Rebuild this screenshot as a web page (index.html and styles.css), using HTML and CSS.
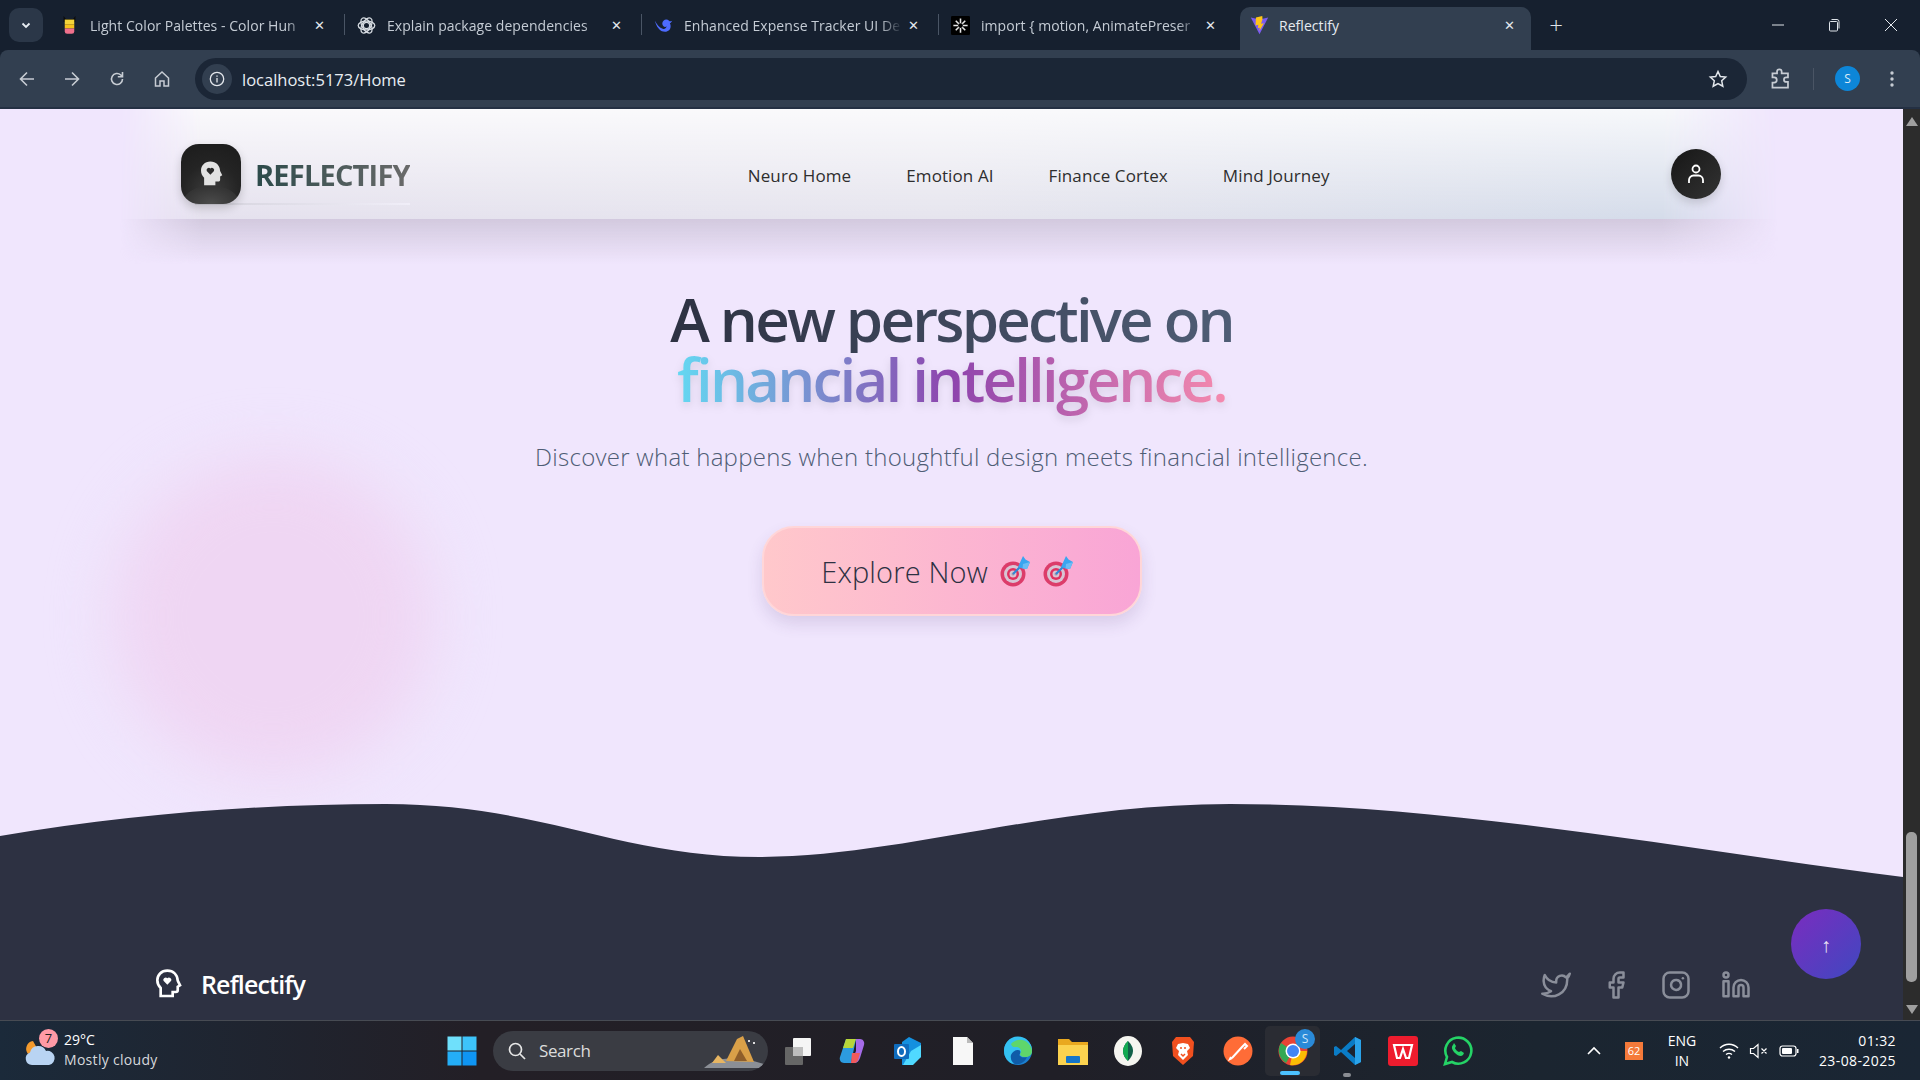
FILE: index.html
```html
<!DOCTYPE html>
<html lang="en">
<head>
<meta charset="utf-8">
<title>Reflectify</title>
<link rel="stylesheet" href="styles.css">
</head>
<body>
<div class="screen">
  <header class="browser">
    <div class="tabstrip">
      <div class="tabmenu"><svg viewBox="0 0 12 12" class="i12"><path d="M2.500 4.500 6 8l3.500-3.500" fill="none" stroke="#e8edf3" stroke-width="1.800"/></svg></div>
      <div class="tab">
        <svg class="favicon" viewBox="0 0 16 16"><path d="M3 0l2 2.500h6L13 0v5H3z" fill="#0c0c0c"/><rect x="4" y="3" width="8" height="4" fill="#f4d43a"/><rect x="4" y="7" width="8" height="3.500" fill="#f6c21c"/><path d="M4 10.500h8V13a2 2 0 0 1-2 2H6a2 2 0 0 1-2-2z" fill="#f0708c"/></svg>
        <span class="tabtitle">Light Color Palettes - Color Hun</span><span class="tabclose">✕</span>
      </div>
      <div class="tab">
        <svg class="favicon" viewBox="0 0 24 24" fill="none" stroke="#d8dde3" stroke-width="1.600"><circle cx="12" cy="12" r="4"/><ellipse cx="12" cy="12" rx="10.500" ry="5.500"/><ellipse cx="12" cy="12" rx="10.500" ry="5.500" transform="rotate(60 12 12)"/><ellipse cx="12" cy="12" rx="10.500" ry="5.500" transform="rotate(120 12 12)"/></svg>
        <span class="tabtitle">Explain package dependencies</span><span class="tabclose">✕</span>
      </div>
      <div class="tab">
        <svg class="favicon" viewBox="0 0 24 24"><path d="M1 6c2 7 6 14 13 14 4 0 7-3 7-7 0-2-.500-3-1-4 1 0 2-1 3-3-2 1-3 1-4 0-2-2-5-2-7 0-2 2-2 5 0 7 1 1 3 1 4 0-1 3-3 4-5 3-4-1-7-5-10-10z" fill="#4d6bfe"/></svg>
        <span class="tabtitle">Enhanced Expense Tracker UI De</span><span class="tabclose">✕</span>
      </div>
      <div class="tab">
        <svg class="favicon" viewBox="0 0 16 16"><rect width="16" height="16" rx="1" fill="#000"/><g stroke="#e8e8e8" stroke-width="1.300"><path d="M8 2v12M2 8h12M4 4l8 8M12 4l-8 8"/></g><circle cx="8" cy="8" r="2" fill="#000"/></svg>
        <span class="tabtitle">import { motion, AnimatePreser</span><span class="tabclose">✕</span>
      </div>
      <div class="tab tab-active">
        <svg class="favicon" viewBox="0 0 24 24"><path d="M1 2l11 21L23 2l-11 2.500z" fill="#7c5cf0"/><path d="M15.500 0 7.500 2l-.5 10 3.500-.8-.6 4 2.500-.5-.5 4.300L17.500 9l-3.500.7 1.800-5.500z" fill="#ffc517"/></svg>
        <span class="tabtitle">Reflectify</span><span class="tabclose">✕</span>
      </div>
      <span class="newtab">+</span>
      <div class="winbtns">
        <span class="winbtn"><svg class="i12" viewBox="0 0 12 12"><path d="M0 6h12" stroke="#dfe4ea" stroke-width="1"/></svg></span>
        <span class="winbtn"><svg class="i14" viewBox="0 0 14 14" fill="none" stroke="#dfe4ea"><rect x="2.500" y="3.500" width="8" height="9.500" rx="1"/><path d="M4.500 1.500h5.500a2 2 0 0 1 2 2v7"/></svg></span>
        <span class="winbtn"><svg class="i14" viewBox="0 0 14 14"><path d="M1 1l12 12M13 1L1 13" stroke="#e6eaef" stroke-width="1"/></svg></span>
      </div>
    </div>
    <div class="toolbar">
      <div class="navbtns">
        <svg class="tool" viewBox="0 0 20 20" fill="none" stroke="#c7ccd3" stroke-width="1.600"><path d="M17 10H4M10 3.500 3.500 10l6.500 6.500"/></svg>
        <svg class="tool" viewBox="0 0 20 20" fill="none" stroke="#c7ccd3" stroke-width="1.600"><path d="M3 10h13M10 3.500l6.500 6.500-6.500 6.500"/></svg>
        <svg class="tool" viewBox="0 0 20 20" fill="none" stroke="#c7ccd3" stroke-width="1.600"><path d="M15.500 10a5.500 5.500 0 1 1-1.700-4l1.700 1.600M15.500 3v4.700h-4.700"/></svg>
        <svg class="tool" viewBox="0 0 20 20" fill="none" stroke="#c7ccd3" stroke-width="1.500"><path d="M3.500 9 10 3l6.500 6v8h-4.500v-5H8v5H3.500z"/></svg>
      </div>
      <div class="omnibox">
        <span class="siteinfo"><svg class="i16" viewBox="0 0 16 16" fill="none" stroke="#e3e7ec" stroke-width="1.300"><circle cx="8" cy="8" r="6.700"/><path d="M8 7v4.500M8 4.400v1.300"/></svg></span>
        <span class="url">localhost:5173/Home</span>
        <svg class="star" viewBox="0 0 20 20" fill="none" stroke="#e3e7ec" stroke-width="1.500"><path d="M10 2.500l2.300 5 5.400.6-4 3.700 1.100 5.400L10 14.500l-4.800 2.700 1.100-5.400-4-3.700 5.400-.6z"/></svg>
      </div>
      <div class="toolright">
        <svg class="tool tool-ext" viewBox="0 0 20 20" fill="none" stroke="#c7ccd3" stroke-width="1.500"><path d="M3 5.500h4V4a2 2 0 0 1 4 0v1.500h5.500V9H15a2 2 0 0 0 0 4h1.500v5H3v-4.500h1.500a2.200 2.200 0 0 0 0-4.500H3z"/></svg>
        <span class="toolsep"></span>
        <span class="avatar">S</span>
        <svg class="tool tool-dots" viewBox="0 0 20 20" fill="#c7ccd3"><circle cx="10" cy="4" r="1.700"/><circle cx="10" cy="10" r="1.700"/><circle cx="10" cy="16" r="1.700"/></svg>
      </div>
    </div>
  </header>

  <div class="viewport">
    <main class="page">
      <div class="blob"></div>
      <nav class="sitenav">
        <div class="brand">
          <span class="brandmark">
            <svg class="headicon" viewBox="0 0 24 24"><path d="M11.500 2C7 2 4 5.200 4 9.200c0 2.600 1.100 4.400 2.500 5.800v6h9v-3h2.300c1 0 1.500-.6 1.500-1.500V14l1.700-1-1.700-3.500C19 5 16 2 11.500 2z" fill="#e2e2e2"/><path d="M11.500 12.500 8.600 9.600a1.800 1.800 0 0 1 2.900-2 1.800 1.800 0 0 1 2.900 2z" fill="#2b2b2b"/></svg>
          </span>
          <span class="brandname">REFLECTIFY</span>
        </div>
        <ul class="navlinks">
          <li>Neuro Home</li>
          <li>Emotion AI</li>
          <li>Finance Cortex</li>
          <li>Mind Journey</li>
        </ul>
        <button class="userbtn" type="button">
          <svg viewBox="0 0 24 24" fill="none" stroke="#fff" stroke-width="1.800"><circle cx="12" cy="7" r="3.500"/><path d="M5 21v-3a4.500 4.500 0 0 1 4.500-4.500h5A4.500 4.500 0 0 1 19 18v3"/></svg>
        </button>
      </nav>

      <section class="hero">
        <h1 class="headline"><span class="line-dark">A new perspective on</span><span class="line-grad">financial intelligence.</span></h1>
        <p class="subhead">Discover what happens when thoughtful design meets financial intelligence.</p>
        <button class="cta" type="button">
          <span>Explore Now</span>
          <svg class="dart" viewBox="0 0 32 32"><circle cx="14" cy="19" r="12.500" fill="#dc3c6a"/><circle cx="14" cy="19" r="9" fill="#d8c4d4"/><circle cx="14" cy="19" r="6" fill="#e0305f"/><circle cx="14" cy="19" r="3.500" fill="#d8c4d4"/><circle cx="14" cy="19" r="1.500" fill="#a898aa"/><path d="M14 19 24 9" stroke="#2f86d6" stroke-width="2.200"/><path d="M19 12 24 1l2.500 3.500L31 7l-3 7-4.500-.6z" fill="#3aa5f0"/><path d="M24 9l7-2-3 7-4.500-.6z" fill="#6bbcf5"/></svg>
          <svg class="dart" viewBox="0 0 32 32"><circle cx="14" cy="19" r="12.500" fill="#dc3c6a"/><circle cx="14" cy="19" r="9" fill="#d8c4d4"/><circle cx="14" cy="19" r="6" fill="#e0305f"/><circle cx="14" cy="19" r="3.500" fill="#d8c4d4"/><circle cx="14" cy="19" r="1.500" fill="#a898aa"/><path d="M14 19 24 9" stroke="#2f86d6" stroke-width="2.200"/><path d="M19 12 24 1l2.500 3.500L31 7l-3 7-4.500-.6z" fill="#3aa5f0"/><path d="M24 9l7-2-3 7-4.500-.6z" fill="#6bbcf5"/></svg>
        </button>
      </section>

      <footer class="footer">
        <svg class="wave" viewBox="0 0 1903 80" preserveAspectRatio="none"><path d="M0 32C130 10 260 0 386 0 540 0 620 53 759 53 900 53 1050 0 1230 0 1450 0 1680 45 1903 73V80H0Z" fill="#2d3142"/></svg>
        <div class="footbody">
          <div class="footbrand">
            <svg class="footicon" viewBox="0 0 24 24"><path d="M11.500 2C7 2 4 5.200 4 9.200c0 2.600 1.100 4.400 2.500 5.800v6h9v-3h2.300c1 0 1.500-.6 1.500-1.500V14l1.700-1-1.700-3.500C19 5 16 2 11.500 2z" fill="none" stroke="#fff" stroke-width="2"/><path d="M11.500 12.500 8.600 9.600a1.800 1.800 0 0 1 2.900-2 1.800 1.800 0 0 1 2.900 2z" fill="#fff"/></svg>
            <span>Reflectify</span>
          </div>
          <div class="socials">
            <svg viewBox="0 0 24 24"><path d="M23 3a10.900 10.900 0 0 1-3 3 4.480 4.480 0 0 0-7.860 3v1A10.660 10.660 0 0 1 3 4s-4 9 5 13a11.640 11.640 0 0 1-7 2c9 5 20 0 20-11.500a4.500 4.500 0 0 0-.08-.83A7.720 7.720 0 0 0 23 3z"/></svg>
            <svg viewBox="0 0 24 24"><path d="M18 2h-3a5 5 0 0 0-5 5v3H7v4h3v8h4v-8h3l1-4h-4V7a1 1 0 0 1 1-1h3z"/></svg>
            <svg viewBox="0 0 24 24"><rect x="2" y="2" width="20" height="20" rx="5"/><path d="M16 11.370A4 4 0 1 1 12.630 8 4 4 0 0 1 16 11.370z"/><path d="M17.500 6.500h.01"/></svg>
            <svg viewBox="0 0 24 24"><path d="M16 8a6 6 0 0 1 6 6v7h-4v-7a2 2 0 0 0-4 0v7h-4v-7a6 6 0 0 1 6-6z"/><rect x="2" y="9" width="4" height="12"/><circle cx="4" cy="4" r="2"/></svg>
          </div>
        </div>
      </footer>
      <button class="totop" type="button">↑</button>
    </main>
    <aside class="scrollbar">
      <span class="arrow-up"></span>
      <span class="thumbspace"><span class="thumb"></span></span>
      <span class="arrow-down"></span>
    </aside>
  </div>

  <div class="taskbar">
    <div class="weather">
      <span class="weathericon">
        <svg viewBox="0 0 32 32"><path d="M9 6a8 8 0 0 0-5 13l10-4z" fill="#f39a2d"/><path d="M8 30a6.500 6.500 0 0 1-2-12.600A8.500 8.500 0 0 1 22 16a6 6 0 0 1 3 14z" fill="#b9d4f3"/></svg>
        <span class="wbadge">7</span>
      </span>
      <span class="wtext"><span>29°C</span><span class="wdesc">Mostly cloudy</span></span>
    </div>
    <div class="taskcenter">
      <svg class="winlogo" viewBox="0 0 30 30"><rect width="14" height="14" x="0.500" y="0.500" fill="#6fe0fb"/><rect width="14" height="14" x="15.500" y="0.500" fill="#3dc4fa"/><rect width="14" height="14" x="0.500" y="15.500" fill="#24aef7"/><rect width="14" height="14" x="15.500" y="15.500" fill="#0f95f3"/></svg>
      <div class="searchbox">
        <svg class="i20" viewBox="0 0 20 20" fill="none" stroke="#e6e6e6" stroke-width="1.700"><circle cx="8.500" cy="8.500" r="6"/><path d="M13 13l5 5"/></svg>
        <span>Search</span>
        <svg class="searchart" viewBox="0 0 60 34"><path d="M0 34C10 24 30 20 60 30v4z" fill="#8b8f96"/><path d="M22 27 33 5l6-3 11 26z" fill="#d9a048"/><path d="M30 27l6-12 7 12z" fill="#8e5e2a"/><path d="M8 29l6-8 8 8z" fill="#e6b562"/><rect x="44" y="6" width="2" height="2" fill="#ddd"/><rect x="49" y="8" width="2" height="2" fill="#ddd"/></svg>
      </div>
      <div class="apps">
        <span class="app"><svg viewBox="0 0 30 30"><rect x="10" y="2" width="18" height="18" rx="1" fill="#f5f5f5"/><rect x="2" y="11" width="18" height="18" rx="1" fill="#666"/><rect x="10" y="11" width="10" height="9" fill="#bdbdbd"/></svg></span>
        <span class="app"><svg viewBox="0 0 30 30"><path d="M8 3h10l-5 24H6c-3 0-5-3-4-6z" fill="#2c9be0"/><path d="M8 3h10l-3 9H5z" fill="#b7d63a"/><path d="M18 3h4c3 0 5 3 4 6l-4 13c-1 3-3 5-6 5h-3l5-12z" fill="#a56be8"/><path d="M14 17h8l-2 7c-1 2-2 3-4 3h-3z" fill="#f05a5a"/></svg></span>
        <span class="app"><svg viewBox="0 0 30 30"><path d="M16 1 28 7v14L16 29H9V6z" fill="#1490df"/><path d="M18 15l10-6v12l-8 8H10z" fill="#50d9ff"/><rect x="1" y="8" width="15" height="15" rx="1" fill="#0f6cbd"/><ellipse cx="8.500" cy="15.500" rx="3.500" ry="4.500" fill="none" stroke="#fff" stroke-width="2"/></svg></span>
        <span class="app"><svg viewBox="0 0 30 30"><path d="M5 1h14l6 6v22H5z" fill="#f7f7f7"/><path d="M19 1l6 6h-6z" fill="#bbb"/></svg></span>
        <span class="app"><svg viewBox="0 0 30 30"><circle cx="15" cy="15" r="14" fill="#1b7fd0"/><path d="M1 15A14 14 0 0 1 29 14c0 5-4 7-8 7-3 0-5-2-4-4-4-3-9 0-9 5 0 2 1 4 3 6C5 27 1 21 1 15z" fill="#35c1f1"/><path d="M8 8c4-5 12-6 17-1 2 2 4 5 4 8 0 4-3 6-7 6-3 0-5-1-5-3 3-3 0-7-4-7-2 0-4 .5-5-3z" fill="#5fd66b"/><path d="M15 14c3 0 3 3 1 5 2 3 5 3 8 2-2 5-7 8-12 7-3-2-5-5-4-9 1-3 4-5 7-5z" fill="#0f5ca8"/></svg></span>
        <span class="app"><svg viewBox="0 0 30 30"><path d="M0 3h11l3 3h16v22H0z" fill="#e9a81f"/><path d="M0 9h30v20H0z" fill="#fbd24f"/><rect x="8" y="20" width="14" height="7" rx="1" fill="#1475c9"/></svg></span>
        <span class="app"><svg viewBox="0 0 30 30"><ellipse cx="15" cy="15" rx="14" ry="15" fill="#f5f5f0"/><path d="M15 5c4 4 5 7 5 10s-2 7-5 10c-3-3-5-6-5-10s2-7 5-10z" fill="#116149"/><path d="M15 5c-3 3-5 6-5 10s2 7 5 10z" fill="#13aa52"/></svg></span>
        <span class="app"><svg viewBox="0 0 30 30"><path d="M8 1h14l4 5-1 14-10 9-10-9L4 6z" fill="#f1501f"/><path d="M15 7l5 1 2 4-3 3 1 4-5 5-5-5 1-4-3-3 2-4z" fill="#fff"/><path d="M12 12h2M16 12h2M13 18l2 2 2-2" stroke="#f1501f" stroke-width="1.500" fill="none"/></svg></span>
        <span class="app"><svg viewBox="0 0 30 30"><circle cx="15" cy="15" r="14.500" fill="#ff6c37"/><path d="M9 22l10-11M19 11l3-3 2 2-3 3M9 22l-2 1 1-2" stroke="#fff" stroke-width="2" fill="none"/></svg></span>
        <span class="app app-active"><svg viewBox="0 0 30 30"><circle cx="15" cy="15" r="14.500" fill="#e94335"/><path d="M15 15h14A14.500 14.500 0 0 1 12 29z" fill="#fbbc04"/><path d="M15 15 8 27A14.500 14.500 0 0 1 3 7z" fill="#34a853"/><circle cx="15" cy="15" r="7.500" fill="#fff"/><circle cx="15" cy="15" r="6" fill="#4285f4"/></svg><span class="appbadge">S</span><span class="runbar"></span></span>
        <span class="app"><svg viewBox="0 0 30 30"><path d="M22 1 28 4v22l-6 3L8 16l-5 4-2-1v-8l2-1 5 4z" fill="#0a7cc6"/><path d="M22 1 28 4v22l-6 3z" fill="#2aa3ea"/><path d="M22 8v14l-8-7z" fill="#1c2430"/></svg><span class="rundot"></span></span>
        <span class="app"><svg viewBox="0 0 30 30"><rect width="30" height="30" rx="3" fill="#ee1c2e"/><path d="M6 9h18l-3 13h-3l-3-9-3 9H9z" fill="none" stroke="#fff" stroke-width="2.200"/></svg></span>
        <span class="app"><svg viewBox="0 0 30 30"><path d="M2 28l2-7A13 13 0 1 1 9 26z" fill="none" stroke="#25d366" stroke-width="2.600"/><path d="M10 9c-2 2-1 5 2 8s6 4 8 2l1-2-3-2-2 1c-1 0-4-3-4-4l1-2-2-3z" fill="#25d366"/></svg></span>
      </div>
    </div>
    <div class="tray">
      <svg class="trayup" viewBox="0 0 16 16" fill="none" stroke="#fff" stroke-width="1.600"><path d="M2 11l6-6 6 6"/></svg>
      <span class="traybadge">62</span>
      <span class="traylang"><span>ENG</span><span>IN</span></span>
      <svg class="trayico" viewBox="0 0 20 20" fill="none" stroke="#fff" stroke-width="1.400"><path d="M1 7c5-5 13-5 18 0M4 10.500c3.500-3 8.500-3 12 0M7 13.500c2-1.500 4-1.500 6 0"/><circle cx="10" cy="16.500" r="1.200" fill="#fff" stroke="none"/></svg>
      <svg class="trayico" viewBox="0 0 20 20" fill="none" stroke="#fff" stroke-width="1.200"><path d="M1.500 7.500h3L9 3.500v13l-4.500-4h-3zM12.500 7.500l5 5M17.500 7.500l-5 5"/></svg>
      <svg class="trayico" viewBox="0 0 20 20"><rect x="1" y="5" width="16" height="10" rx="2.500" fill="none" stroke="#fff" stroke-width="1.200"/><rect x="3" y="7" width="10" height="6" rx="1" fill="#fff"/><rect x="18" y="8" width="1.500" height="4" fill="#fff"/></svg>
      <span class="clock"><span>01:32</span><span>23-08-2025</span></span>
    </div>
  </div>
</div>
</body>
</html>
```

FILE: styles.css
```css
* { box-sizing: border-box; }
html, body { margin: 0; height: 100%; overflow: hidden; }
body { font-family: "Open Sans", "Noto Sans", sans-serif; background: #16202f; }
button { font: inherit; border: 0; padding: 0; }
svg { display: block; flex: none; }
.i12 { width: 12px; height: 12px; }
.i14 { width: 14px; height: 14px; }
.i16 { width: 16px; height: 16px; }
.i20 { width: 20px; height: 20px; }

.screen { display: flex; flex-direction: column; width: 1920px; height: 1080px; }

/* browser chrome */
.browser { flex: none; height: 109px; background: #16202f; }
.tabstrip { display: flex; align-items: flex-end; height: 50px; padding-left: 9px; }
.tabmenu { width: 34px; height: 34px; margin: 0 5px 8px 0; border-radius: 10px; background: #2b3748; display: flex; align-items: center; justify-content: center; }
.tab { position: relative; display: flex; align-items: center; width: 297px; height: 43px; padding: 0 15px 7px 12px; color: #c5ccd5; font-size: 14px; letter-spacing: 0.05px; }
.tab::after { content: ""; position: absolute; right: 0; top: 7px; height: 21px; width: 1px; background: #4a5565; }
.tab:nth-child(5)::after { display: none; }
.favicon { width: 19px; height: 19px; margin-right: 11px; }
.tabtitle { flex: 1; min-width: 0; overflow: hidden; white-space: nowrap; -webkit-mask-image: linear-gradient(90deg, #000 90%, transparent); mask-image: linear-gradient(90deg, #000 90%, transparent); }
.tabclose { width: 20px; margin-left: 2px; font-size: 13px; text-align: center; color: #e4e8ed; }
.tab-active { width: 291px; margin-left: 4px; padding: 0 11px 7px 10px; background: #323f50; border-radius: 10px 10px 0 0; color: #e6ebf0; }
.tab-active::after { display: none; }
.tab-active .favicon { margin-right: 10px; }
.tab-active .tabtitle { -webkit-mask-image: none; mask-image: none; }
.newtab { width: 50px; height: 43px; color: #dfe4ea; font-size: 24px; font-weight: 300; line-height: 36px; text-align: center; }
.winbtns { display: flex; margin-left: auto; padding-right: 1px; align-self: flex-start; }
.winbtn { width: 56.500px; height: 50px; display: flex; align-items: center; justify-content: center; }

.toolbar { display: flex; align-items: center; height: 59px; background: #323f50; border-bottom: 2px solid #243043; border-radius: 8px 8px 0 0; }
.navbtns { display: flex; gap: 25px; padding-left: 17px; }
.tool { width: 20px; height: 20px; }
.tool-ext { width: 23px; height: 23px; }
.omnibox { display: flex; align-items: center; width: 1552px; height: 42px; margin-left: 23px; padding: 0 19px 0 7px; border-radius: 21px; background: #1b2636; }
.siteinfo { width: 30px; height: 30px; border-radius: 50%; background: #323f50; display: flex; align-items: center; justify-content: center; }
.url { margin-left: 10px; padding-top: 1px; color: #e8edf3; font-size: 16.500px; }
.star { width: 20px; height: 20px; margin-left: auto; }
.toolright { display: flex; align-items: center; margin-left: 22px; }
.toolsep { width: 1px; height: 22px; margin: 0 21px 0 21px; background: #4a5565; }
.avatar { width: 25px; height: 25px; border-radius: 50%; background: #0d86d8; color: #dcebf7; font-size: 12px; line-height: 25px; text-align: center; }
.tool-dots { margin-left: 22px; }

/* page */
.viewport { flex: 1; display: flex; min-height: 0; }
.page { position: relative; flex: 1; display: flex; flex-direction: column; overflow: hidden; background: #f0e6fd; }
.blob { position: absolute; left: 113px; top: 348px; width: 320px; height: 320px; border-radius: 50%; background: #efd6f3; filter: blur(30px); }

.sitenav { position: relative; flex: none; display: flex; align-items: center; height: 110px; padding: 20px 182px 0 181px; }
.sitenav::before { content: ""; position: absolute; left: 120px; right: 125px; top: 0; height: 155px;
  background:
    linear-gradient(180deg, #d2c9de 0, rgba(240,230,253,0) 100%) 0 110px / 100% 45px no-repeat,
    linear-gradient(180deg, rgba(255,255,255,.8), rgba(255,255,255,0)) 0 0 / 100% 110px no-repeat,
    linear-gradient(90deg, #e5e1ee, #e6e5ee 50%, #d5dcea 92%) 0 0 / 100% 110px no-repeat;
  -webkit-mask-image: linear-gradient(90deg, transparent 0, #000 5%, #000 93%, transparent 100%);
  mask-image: linear-gradient(90deg, transparent 0, #000 5%, #000 93%, transparent 100%); }
.brand { position: relative; display: flex; align-items: center; gap: 14px; }
.brand::after { content: ""; position: absolute; left: 14px; right: 0; bottom: 0; height: 2px; background: linear-gradient(90deg, #d4d2dc, #f0eef8); }
.brandmark { position: relative; z-index: 1; width: 60px; height: 60px; border-radius: 18px; background: radial-gradient(ellipse 40px 26px at 50% 100%, #4c4c4c 0, #333 70%, transparent 72%), radial-gradient(circle at 50% 80%, #3d3d3d 0, #242424 50%, #1b1b1b 100%); display: flex; align-items: center; justify-content: center; box-shadow: 0 4px 10px rgba(0,0,0,.18); }
.headicon { width: 30px; height: 30px; }
.brandname { font-size: 29px; font-weight: 700; letter-spacing: -0.8px; line-height: 60px; padding-top: 2px; background: linear-gradient(90deg, #2c4a4a, #6a6a6a); -webkit-background-clip: text; background-clip: text; color: transparent; }
.navlinks { position: relative; display: flex; gap: 55px; list-style: none; margin: 2px 0 0 338px; padding: 0; color: #2e2e2e; font-size: 17px; font-weight: 500; letter-spacing: 0.1px; }
.userbtn { position: relative; width: 50px; height: 50px; margin-left: auto; border-radius: 50%; background: linear-gradient(135deg, #161616, #333); display: flex; align-items: center; justify-content: center; box-shadow: 0 4px 10px rgba(0,0,0,.15); }
.userbtn svg { width: 24px; height: 24px; }

.hero { position: relative; flex: 1; display: flex; flex-direction: column; align-items: center; padding-top: 70px; }
.headline { margin: 0; display: flex; flex-direction: column; align-items: center; font-size: 60px; font-weight: 550; line-height: 60px; letter-spacing: -2.800px; }
.line-dark { background: linear-gradient(90deg, #2d3142, #4f5d75); -webkit-background-clip: text; background-clip: text; color: transparent; padding-bottom: 4px; margin-bottom: -4px; }
.line-grad { background: linear-gradient(90deg, #64d8f2, #8e44ad 50%, #f58aae); -webkit-background-clip: text; background-clip: text; color: transparent; padding-bottom: 14px; margin-bottom: -14px; filter: drop-shadow(0 4px 4px rgba(0,0,0,.1)); }
.subhead { margin: 30px 0 0; color: #4f5d75; font-size: 24px; font-weight: 300; line-height: 36px; letter-spacing: 0.27px; }
.cta { display: flex; align-items: center; justify-content: center; gap: 11px; width: 380px; height: 90px; margin-top: 51px; padding-right: 8px; border: 2px solid #ffd6d8; border-radius: 32px; background: linear-gradient(90deg, #ffc8cb, #f9a5d6); color: #2d3142; font-size: 29px; font-weight: 300; letter-spacing: 0.15px; box-shadow: 0 8px 16px rgba(80,50,110,.14); }
.dart { width: 32px; height: 32px; }

.footer { flex: none; position: relative; }
.wave { width: 100%; height: 80px; }
.footbody { display: flex; align-items: flex-end; justify-content: space-between; height: 137px; margin-top: -1px; padding: 0 152px 20px 152px; background: #2d3142; }
.footbrand { display: flex; align-items: center; gap: 17px; color: #fff; font-size: 25px; font-weight: 600; letter-spacing: -0.85px; line-height: 30px; }
.footicon { width: 32px; height: 32px; }
.socials { display: flex; gap: 30px; }
.socials svg { width: 30px; height: 30px; fill: none; stroke: #8a8e9a; stroke-width: 2; stroke-linejoin: round; stroke-linecap: round; }
.totop { position: absolute; left: 1791px; top: 800px; width: 70px; height: 70px; border-radius: 50%; background: linear-gradient(135deg, #7b2cbf, #3f48c0); color: #e8e2f5; font-size: 20px; }

.scrollbar { flex: none; width: 17px; display: flex; flex-direction: column; background: #2c2c2c; }
.arrow-up, .arrow-down { flex: none; width: 0; height: 0; margin: 8px auto 0; border: 6px solid transparent; border-top: 0; border-bottom: 9px solid #9f9f9f; }
.arrow-down { margin: 0 auto 6px; border-bottom: 0; border-top: 9px solid #9f9f9f; }
.thumbspace { flex: 1; display: flex; flex-direction: column; justify-content: flex-end; padding: 0 3px 23px; }
.thumb { height: 150px; border-radius: 5px; background: #9f9f9f; }

/* taskbar */
.taskbar { flex: none; position: relative; display: flex; align-items: center; height: 60px; border-top: 1px solid #474b53; background: linear-gradient(90deg, #1b2a3a 0, #231f26 25%, #201f27 55%, #1b2530 80%, #1a2634 100%); color: #fff; font-size: 14px; }
.weather { display: flex; align-items: center; gap: 8px; width: 447px; padding-left: 24px; }
.weathericon { position: relative; width: 32px; height: 34px; margin-top: -3px; }
.weathericon svg { width: 32px; height: 32px; margin-top: 3px; }
.wbadge { position: absolute; left: 15px; top: -3px; width: 19px; height: 19px; border-radius: 50%; background: #ff9aa6; color: #222; font-size: 13px; line-height: 19px; text-align: center; }
.wtext { display: flex; flex-direction: column; margin-top: -2px; line-height: 20px; }
.wdesc { color: #d6d8dc; font-size: 14px; letter-spacing: 0.3px; }
.taskcenter { display: flex; align-items: center; }
.winlogo { width: 30px; height: 30px; }
.searchbox { display: flex; align-items: center; gap: 12px; width: 275px; height: 40px; margin-left: 16px; padding-left: 14px; border-radius: 20px; background: #3a3c43; color: #dcdcdc; font-size: 17px; letter-spacing: -0.4px; overflow: hidden; }
.searchart { width: 60px; height: 34px; margin: 0 4px 0 auto; }
.apps { display: flex; margin-left: 2px; }
.app { position: relative; width: 55px; height: 50px; display: flex; align-items: center; justify-content: center; }
.app svg { width: 30px; height: 30px; }
.app-active { background: #2a2c33; border-radius: 5px; }
.appbadge { position: absolute; right: 5px; top: 3px; width: 20px; height: 20px; border-radius: 50%; background: #2a8ad8; color: #cfe5f7; font-size: 12px; line-height: 20px; text-align: center; }
.runbar { position: absolute; left: 15px; bottom: 1px; width: 20px; height: 4px; border-radius: 2px; background: #4cc2ff; }
.rundot { position: absolute; left: 23px; bottom: -1px; width: 8px; height: 4px; border-radius: 2px; background: #8a8d93; }
.tray { display: flex; align-items: center; margin-left: auto; padding-right: 24px; }
.trayup { width: 16px; height: 16px; }
.traybadge { width: 18px; height: 18px; margin-left: 23px; background: #f57a3a; color: #fff; font-size: 11px; line-height: 18px; text-align: center; }
.traylang { display: flex; flex-direction: column; align-items: center; width: 40px; margin-left: 19px; line-height: 20px; }
.trayico { width: 20px; height: 20px; margin-left: 10px; }
.traylang + .trayico { margin-left: 17px; }
.clock { display: flex; flex-direction: column; align-items: flex-end; margin-left: 20px; line-height: 20px; letter-spacing: 0.4px; }
```
